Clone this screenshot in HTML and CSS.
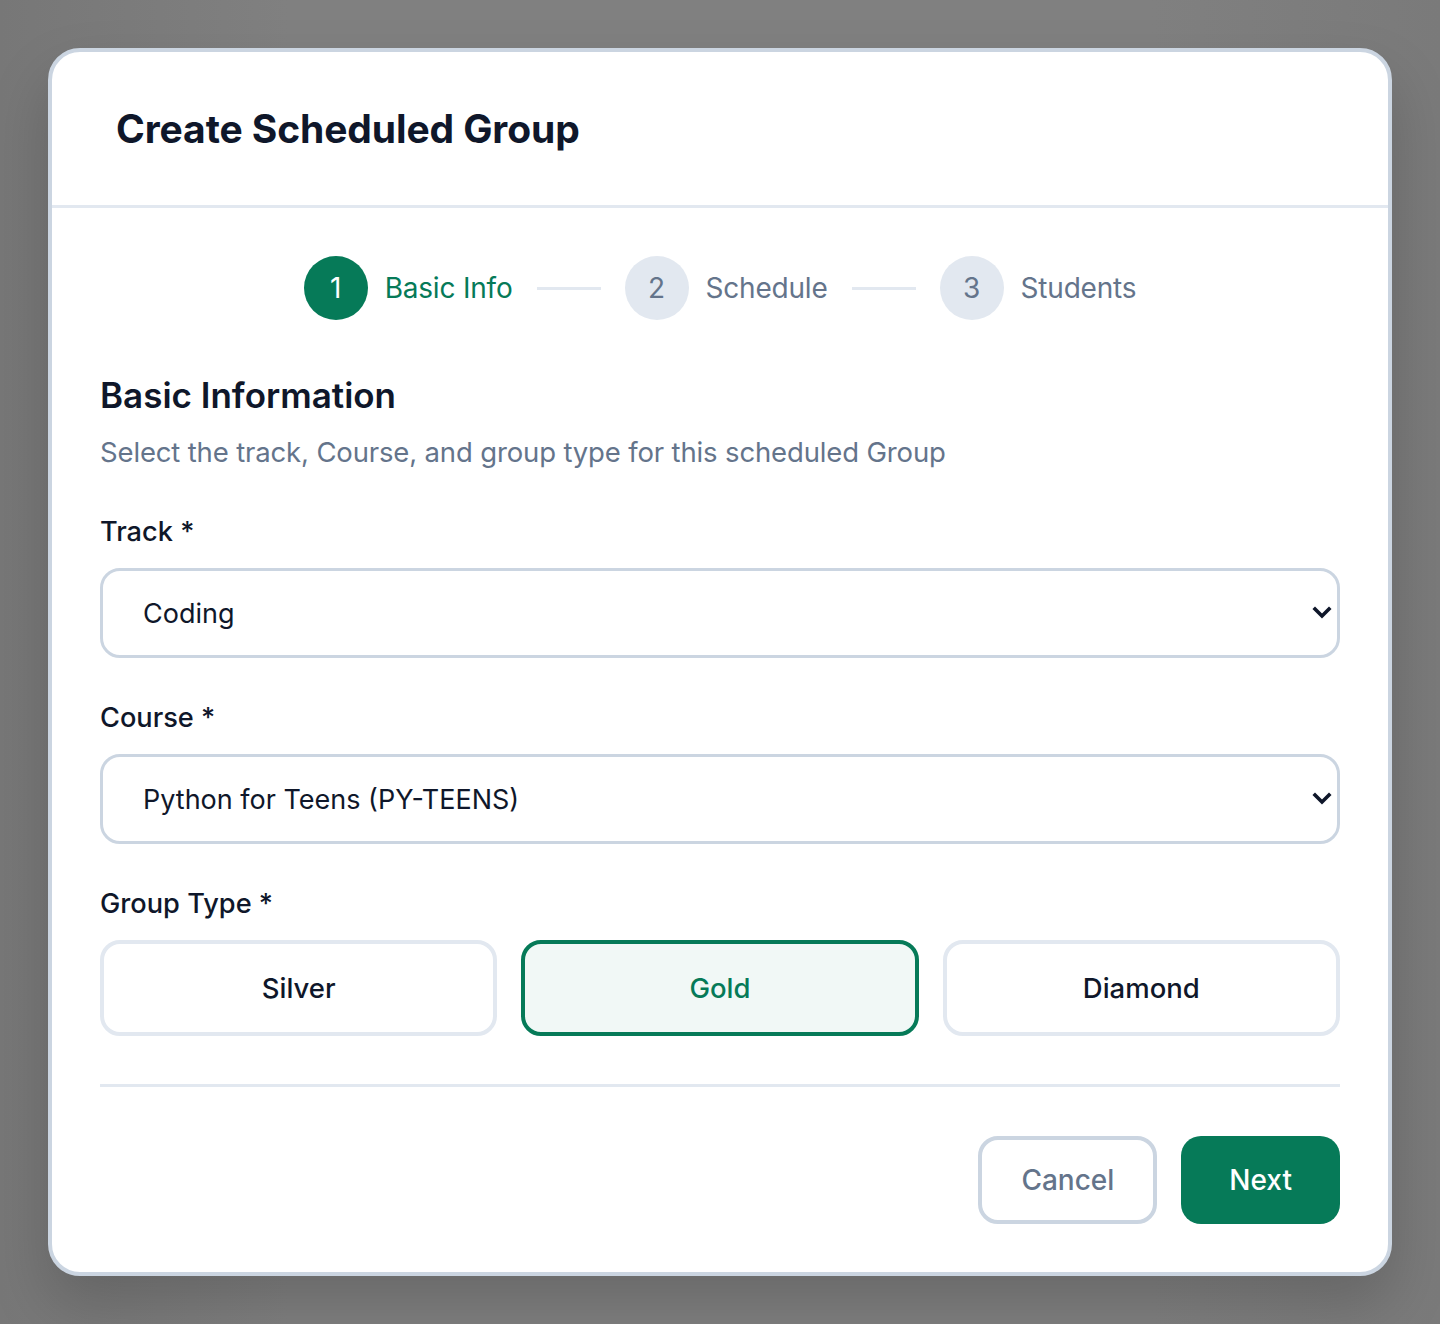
FILE: index.html
```html
<!DOCTYPE html>
<html lang="en">
<head>
    <meta charset="UTF-8">
    <meta name="viewport" content="width=device-width, initial-scale=1.0">
    <title>Create Scheduled Group</title>
    <link rel="stylesheet" href="styles.css">
</head>
<body>

    <div class="backdrop">
        <div class="modal">
            <div class="modal-header">
                <h1>Create Scheduled Group</h1>
            </div>

            <div class="modal-body">
                <div class="stepper">
                    <div class="step active">
                        <span class="step-num">1</span>
                        <span class="step-label">Basic Info</span>
                    </div>
                    <span class="step-line"></span>
                    <div class="step">
                        <span class="step-num">2</span>
                        <span class="step-label">Schedule</span>
                    </div>
                    <span class="step-line"></span>
                    <div class="step">
                        <span class="step-num">3</span>
                        <span class="step-label">Students</span>
                    </div>
                </div>

                <h2 class="section-title">Basic Information</h2>
                <p class="section-sub">Select the track, Course, and group type for this scheduled Group</p>

                <div class="field">
                    <label class="field-label">Track *</label>
                    <div class="select-wrap">
                        <select class="select">
                            <option>Coding</option>
                        </select>
                        <svg class="chevron" width="20" height="14" viewBox="0 0 20 14">
                            <path d="M3 3 L10 10 L17 3" fill="none" stroke="#0f172a" stroke-width="3.6" stroke-linecap="square"/>
                        </svg>
                    </div>
                </div>

                <div class="field">
                    <label class="field-label">Course *</label>
                    <div class="select-wrap">
                        <select class="select">
                            <option>Python for Teens (PY-TEENS)</option>
                        </select>
                        <svg class="chevron" width="20" height="14" viewBox="0 0 20 14">
                            <path d="M3 3 L10 10 L17 3" fill="none" stroke="#0f172a" stroke-width="3.6" stroke-linecap="square"/>
                        </svg>
                    </div>
                </div>

                <div class="field">
                    <label class="field-label">Group Type *</label>
                    <div class="type-grid">
                        <button class="type-option">Silver</button>
                        <button class="type-option selected">Gold</button>
                        <button class="type-option">Diamond</button>
                    </div>
                </div>

                <div class="modal-footer">
                    <button class="btn btn-cancel">Cancel</button>
                    <button class="btn btn-next">Next</button>
                </div>
            </div>
        </div>
    </div>

</body>
</html>
```

FILE: styles.css
```css
* { box-sizing: border-box; }
body { margin: 0; font-family: Inter, "Noto Sans", sans-serif; background: #7d7d7d; }
.backdrop { width: 1440px; height: 1324px; padding: 48px; background: linear-gradient(90deg, #777 0%, #808080 20%, #808080 80%, #7a7a7a 100%); }

.modal { width: 1344px; background: #fff; border: 4px solid #cbd5e1; border-radius: 32px; box-shadow: 0 30px 60px rgba(0, 0, 0, 0.18); overflow: hidden; }
.modal-header { padding: 48px 64px; border-bottom: 3px solid #e2e8f0; }
.modal-header h1 { margin: 0; font-size: 39px; line-height: 57px; font-weight: 700; color: #0f172a; letter-spacing: -0.1px; }

.modal-body { padding: 48px; }

.stepper { display: flex; justify-content: center; align-items: center; margin-bottom: 52px; }
.step { display: flex; align-items: center; gap: 17px; }
.step-num { width: 64px; height: 64px; border-radius: 50%; background: #e2e8f0; color: #64748b; font-size: 28px; display: flex; align-items: center; justify-content: center; }
.step-label { font-size: 28px; color: #64748b; letter-spacing: -0.2px; }
.step.active .step-num { background: #067a58; color: #fff; }
.step.active .step-label { color: #067a58; }
.step-line { width: 64px; height: 3px; background: #e2e8f0; margin: 0 24px; }

.section-title { margin: 0; font-size: 35px; line-height: 46px; font-weight: 600; color: #0f172a; }
.section-sub { margin: 14px 0 0; font-size: 27.5px; line-height: 40px; color: #64748b; letter-spacing: -0.15px; }

.field { margin-top: 40px; }
.field-label { display: block; font-size: 27.2px; line-height: 40px; font-weight: 500; color: #0f172a; margin-bottom: 16px; }

.select-wrap { position: relative; }
.select { width: 100%; height: 90px; appearance: none; -webkit-appearance: none; border: 3px solid #cbd5e1; border-radius: 20px; background: #fff; padding: 0 40px; font-family: inherit; font-size: 27px; color: #0f172a; }
.chevron { position: absolute; right: 8px; top: 38px; }

.type-grid { display: grid; grid-template-columns: 1fr 1fr 1fr; gap: 24px; }
.type-option { height: 96px; border: 4px solid #e2e8f0; border-radius: 20px; background: #fff; font-family: inherit; font-size: 27.5px; font-weight: 500; color: #0f172a; }
.type-option.selected { border-color: #067a58; background: #f1f8f6; color: #067a58; }

.modal-footer { margin-top: 48px; border-top: 3px solid #e2e8f0; padding-top: 49px; display: flex; justify-content: flex-end; gap: 24px; }
.btn { height: 88px; border-radius: 20px; font-family: inherit; font-size: 28px; font-weight: 500; }
.btn-cancel { padding: 0 39px; border: 4px solid #cbd5e1; background: #fff; color: #64748b; }
.btn-next { padding: 0 48px; border: none; background: #067a58; color: #fff; }
```
